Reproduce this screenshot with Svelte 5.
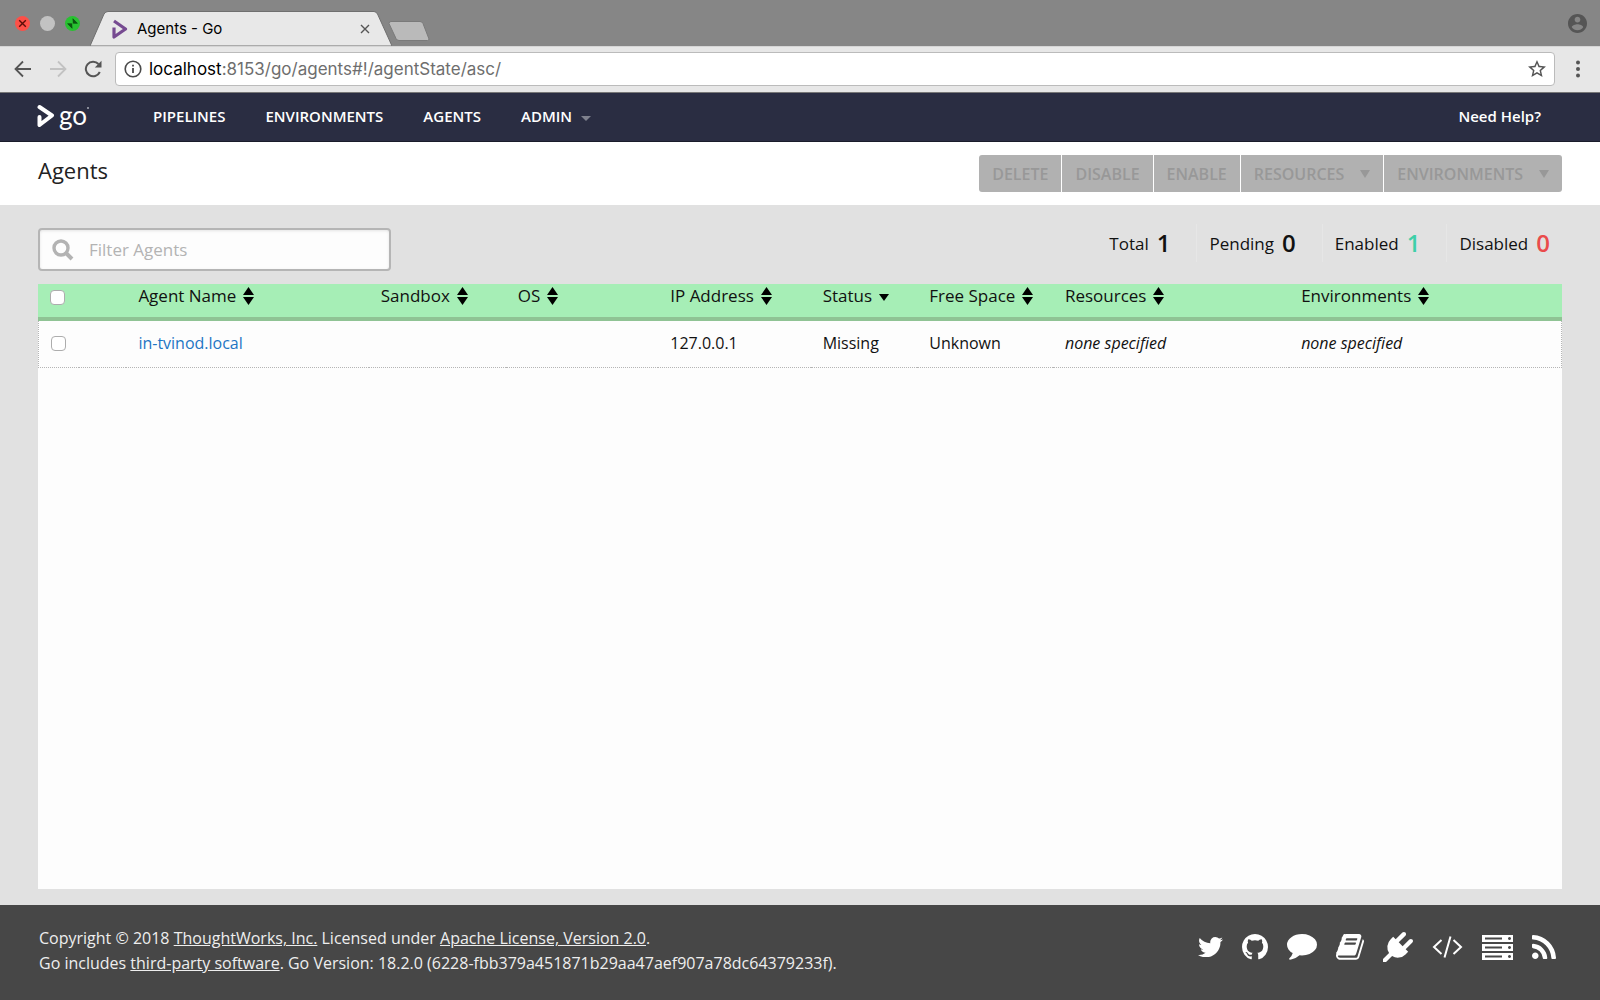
<script lang="ts">
  interface Agent {
    name: string;
    sandbox: string;
    os: string;
    ip: string;
    status: string;
    freeSpace: string;
    resources: string[];
    environments: string[];
  }

  const agents: Agent[] = [
    {
      name: 'in-tvinod.local',
      sandbox: '',
      os: '',
      ip: '127.0.0.1',
      status: 'Missing',
      freeSpace: 'Unknown',
      resources: [],
      environments: [],
    },
  ];

  const columns = [
    { key: 'name', label: 'Agent Name' },
    { key: 'sandbox', label: 'Sandbox' },
    { key: 'os', label: 'OS' },
    { key: 'ip', label: 'IP Address' },
    { key: 'status', label: 'Status' },
    { key: 'space', label: 'Free Space' },
    { key: 'resources', label: 'Resources' },
    { key: 'environments', label: 'Environments' },
  ];

  const counts = [
    { label: 'Total', value: 1, kind: 'total' },
    { label: 'Pending', value: 0, kind: 'pending' },
    { label: 'Enabled', value: 1, kind: 'enabled' },
    { label: 'Disabled', value: 0, kind: 'disabled' },
  ];

  const actions = [
    { label: 'DELETE', menu: false },
    { label: 'DISABLE', menu: false },
    { label: 'ENABLE', menu: false },
    { label: 'RESOURCES', menu: true },
    { label: 'ENVIRONMENTS', menu: true },
  ];

  let sortedBy = $state('status');
  let filterText = $state('');
  let checked = $state<string[]>([]);

  const visible = $derived(
    agents.filter((a) => a.name.toLowerCase().includes(filterText.toLowerCase()))
  );
  const allChecked = $derived(visible.length > 0 && checked.length === visible.length);

  function toggleAll() {
    checked = allChecked ? [] : visible.map((a) => a.name);
  }
</script>

<div class="window">
  <div class="tab-strip">
    <div class="lights">
      <button class="light close" aria-label="Close window">
        <svg viewBox="0 0 15 15"><path d="M4.200 4.200l6.600 6.600M10.800 4.200l-6.600 6.600" stroke="#5c0d08" stroke-width="1.400" /></svg>
      </button>
      <button class="light minimize" aria-label="Minimize window"></button>
      <button class="light zoom" aria-label="Zoom window">
        <svg viewBox="0 0 15 15" fill="#0b5410">
          <path d="M7.600 2.200L13 7.600L8.200 7.200z" />
          <path d="M7.400 12.800L2 7.400L6.800 7.800z" />
          <path d="M7.800 2.500V7.500H12.500zM7.200 12.500V7.500H2.500z" />
        </svg>
      </button>
    </div>
    <div class="tab">
      <svg class="tab-shape" viewBox="0 0 302 35" preserveAspectRatio="none">
        <path d="M0 35L14 3Q15.500 .5 18 .5H284Q286 .5 287.500 3L302 35z" fill="#e8e8e8" stroke="#6f6f6f" />
      </svg>
      <svg class="favicon" viewBox="0 0 16 20">
        <path d="M2 2L13.500 10L2 18V8.500" fill="none" stroke="#764a91" stroke-width="3.200" stroke-linejoin="round" />
      </svg>
      <span class="tab-title">Agents - Go</span>
      <button class="tab-close" aria-label="Close tab">
        <svg viewBox="0 0 10 10"><path d="M1 1l8 8M9 1l-8 8" stroke="#555" stroke-width="1.400" /></svg>
      </button>
    </div>
    <button class="new-tab" aria-label="New tab">
      <svg viewBox="0 0 42 20">
        <path d="M3 .5H32Q34 .5 35 2.500L41 18Q41 19.500 39.500 19.500H11Q9 19.500 8 17.500L1 2.500Q1 .5 3 .5z" fill="#bababa" stroke="#7a7a7a" />
      </svg>
    </button>
    <button class="profile" aria-label="Profile">
      <svg viewBox="2 2 20 20" fill="#555">
        <path d="M12 2C6.480 2 2 6.480 2 12s4.480 10 10 10 10-4.480 10-10S17.520 2 12 2zm0 3c1.660 0 3 1.340 3 3s-1.340 3-3 3-3-1.340-3-3 1.340-3 3-3zm0 14.200c-2.500 0-4.710-1.280-6-3.220.030-1.990 4-3.080 6-3.080 1.990 0 5.970 1.090 6 3.080-1.290 1.940-3.500 3.220-6 3.220z" />
      </svg>
    </button>
  </div>

  <div class="toolbar">
    <div class="tools">
      <button class="tool" aria-label="Back">
        <svg viewBox="0 0 18 18" fill="none" stroke="#555" stroke-width="1.800">
          <path d="M17 9H2M9 1.500L1.500 9L9 16.500" />
        </svg>
      </button>
      <button class="tool" aria-label="Forward">
        <svg viewBox="0 0 18 18" fill="none" stroke="#c2c2c2" stroke-width="1.800">
          <path d="M1 9H16M9 1.500L16.500 9L9 16.500" />
        </svg>
      </button>
      <button class="tool" aria-label="Reload">
        <svg viewBox="0 0 18 18" fill="none" stroke="#555" stroke-width="2">
          <path d="M15.800 12A7.300 7.300 0 1 1 14.500 4" />
          <path d="M17.500 .8V7.500H10.800z" fill="#555" stroke="none" />
        </svg>
      </button>
    </div>
    <div class="address">
      <svg class="info" viewBox="0 0 18 18" fill="none" stroke="#4a4a4a">
        <circle cx="9" cy="9" r="7.800" stroke-width="1.600" />
        <path d="M9 8v5M9 4.800v1.800" stroke-width="1.800" />
      </svg>
      <span class="url"><b>localhost</b>:8153/go/agents#!/agentState/asc/</span>
      <button class="star" aria-label="Bookmark this page">
        <svg viewBox="2 1 20 21" fill="#555">
          <path d="M22 9.240l-7.190-.620L12 2 9.190 8.630 2 9.240l5.460 4.730L5.820 21 12 17.270 18.180 21l-1.630-7.030L22 9.240zM12 15.400l-3.760 2.270 1-4.280-3.320-2.880 4.380-.380L12 6.100l1.710 4.040 4.380.380-3.320 2.880 1 4.280L12 15.400z" />
        </svg>
      </button>
    </div>
    <button class="menu" aria-label="Browser menu">
      <svg viewBox="0 0 4 18" fill="#555">
        <circle cx="2" cy="2.500" r="2" /><circle cx="2" cy="9" r="2" /><circle cx="2" cy="15.500" r="2" />
      </svg>
    </button>
  </div>

  <nav class="site-nav">
    <a class="logo" href="#home" aria-label="Go home">
      <svg viewBox="0 0 18 24" fill="none" stroke="#fff" stroke-width="4" stroke-linejoin="round" stroke-linecap="round">
        <path d="M2.500 3L15 11.500L2.500 21V13" />
      </svg>
      <span class="wordmark">go</span>
    </a>
    <a href="#pipelines">PIPELINES</a>
    <a href="#environments">ENVIRONMENTS</a>
    <a href="#agents">AGENTS</a>
    <a class="has-menu" href="#admin">ADMIN</a>
    <a class="help" href="#help">Need Help?</a>
  </nav>

  <header class="page-header">
    <h1>Agents</h1>
    <div class="actions">
      {#each actions as action (action.label)}
        <button class:dropdown={action.menu} disabled>{action.label}</button>
      {/each}
    </div>
  </header>

  <main>
    <div class="summary">
      <div class="search">
        <svg viewBox="0 0 22 22" fill="none" stroke="#b3b3b3">
          <circle cx="9" cy="9" r="7" stroke-width="3.400" />
          <path d="M14 14l6 6" stroke-width="4" />
        </svg>
        <input type="text" placeholder="Filter Agents" aria-label="Filter Agents" bind:value={filterText} />
      </div>
      <ul class="counts">
        {#each counts as count (count.kind)}
          <li class={count.kind}>
            <span>{count.label}</span>
            <strong>{count.value}</strong>
          </li>
        {/each}
      </ul>
    </div>

    <div class="panel">
      <table>
        <colgroup>
          <col class="col-check" />
          <col class="col-icon" />
          {#each columns as column (column.key)}
            <col class="col-{column.key}" />
          {/each}
        </colgroup>
        <thead>
          <tr>
            <th class="check">
              <input type="checkbox" aria-label="Select all agents" checked={allChecked} onchange={toggleAll} />
            </th>
            <th></th>
            {#each columns as column (column.key)}
              <th>
                <button class="sort" onclick={() => (sortedBy = column.key)}>
                  {column.label}
                  <svg viewBox="0 0 11 18">
                    {#if sortedBy === column.key}
                      <path d="M0 7H10L5 14z" />
                    {:else}
                      <path d="M0 8L5.500 0L11 8zM0 10H11L5.500 18z" />
                    {/if}
                  </svg>
                </button>
              </th>
            {/each}
          </tr>
        </thead>
        <tbody>
          {#each visible as agent (agent.name)}
            <tr>
              <td class="check">
                <input type="checkbox" aria-label="Select {agent.name}" value={agent.name} bind:group={checked} />
              </td>
              <td></td>
              <td><a href="#agent">{agent.name}</a></td>
              <td>{agent.sandbox}</td>
              <td>{agent.os}</td>
              <td>{agent.ip}</td>
              <td>{agent.status}</td>
              <td>{agent.freeSpace}</td>
              <td>
                {#if agent.resources.length}{agent.resources.join(' | ')}{:else}<em>none specified</em>{/if}
              </td>
              <td>
                {#if agent.environments.length}{agent.environments.join(' | ')}{:else}<em>none specified</em>{/if}
              </td>
            </tr>
          {/each}
        </tbody>
      </table>
    </div>
  </main>

  <footer>
    <div class="legal">
      <p>
        Copyright © 2018 <a href="#thoughtworks">ThoughtWorks, Inc.</a> Licensed under
        <a href="#license">Apache License, Version 2.0</a>.
      </p>
      <p>
        Go includes <a href="#third-party">third-party software</a>. Go Version: 18.2.0
        (6228-fbb379a451871b29aa47aef907a78dc64379233f).
      </p>
    </div>
    <div class="social">
      <a href="#twitter" aria-label="Twitter">
        <svg width="25" viewBox="108 256 1576 1280"><path d="M1684 408q-67 98-162 167 1 14 1 42 0 130-38 259.500t-115.500 248.500-184.500 210.500-258 146-323 54.500q-271 0-496-145 35 4 78 4 225 0 401-138-105-2-188-64.500t-114-159.500q33 5 61 5 43 0 85-11-112-23-185.500-111.500t-73.500-205.500v-4q68 38 146 41-66-44-105-115t-39-154q0-88 44-163 121 149 294.500 238.500t371.500 99.500q-8-38-8-74 0-134 94.500-228.500t228.500-94.500q140 0 236 102 109-21 205-78-37 115-142 178 93-10 186-50z" /></svg>
      </a>
      <a href="#github" aria-label="GitHub">
        <svg width="26" viewBox="128 128 1536 1536"><path d="M896 128q209 0 385.500 103t279.500 279.500 103 385.500q0 251-146.500 451.500t-378.500 277.500q-27 5-40-7t-13-30q0-3 .5-76.500t.5-134.500q0-97-52-142 57-6 102.500-18t94-39 81-66.500 53-105 20.500-150.500q0-119-79-206 37-91-8-204-28-9-81 11t-92 44l-38 24q-93-26-192-26t-192 26q-16-11-42.500-27t-83.500-38.500-85-13.500q-45 113-8 204-79 87-79 206 0 85 20.500 150t52.500 105 80.500 67 94 39 102.500 18q-39 36-49 103-21 10-45 15t-57 5-65.500-21.500-55.500-62.500q-19-32-48.500-52t-49.500-24l-20-3q-21 0-29 4.500t-5 11.500 9 14 13 12l7 5q22 10 43.500 38t31.500 51l10 23q13 38 44 61.500t67 30 69.500 7 55.500-3.500l23-4q0 38 .5 88.500t.5 54.500q0 18-13 30t-40 7q-232-77-378.500-277.500t-146.500-451.500q0-209 103-385.500t279.500-279.500 385.500-103z" /></svg>
      </a>
      <a href="#chat" aria-label="Chat">
        <svg width="30" viewBox="0 256 1792 1536"><path d="M1792 896q0 174-120 321.500t-326 233-450 85.500q-70 0-145-8-198 175-460 242-49 14-114 22-17 2-30.500-9t-17.500-29v-1q-3-4-.5-12t2-10 4.500-9.500l6-9 7-8.500 8-9q7-8 31-34.500t34.500-38 31-39.500 32.500-51 27-59 26-76q-157-89-247.500-220t-90.500-281q0-130 71-248.500t191-204.500 286-136.500 348-50.500q244 0 450 85.500t326 233 120 321.500z" /></svg>
      </a>
      <a href="#docs" aria-label="Documentation">
        <svg width="28" viewBox="64 128 1664 1536"><path d="M1703 478q40 57 18 129l-275 906q-19 64-76.500 107.500t-122.500 43.500h-923q-77 0-148.500-53.500t-99.500-131.500q-24-67-2-127 0-4 3-27t4-37q1-8-3-21.500t-3-19.500q2-11 8-21t16.500-23.500 16.500-23.500q23-38 45-91.500t30-91.500q3-10 .5-30t-.5-28q3-11 17-28t17-23q21-36 42-92t25-90q1-9-2.500-32t.5-28q4-13 22-30.500t22-22.500q19-26 42.500-84.500t27.500-96.500q1-8-3-25.500t-2-26.500q2-8 9-18t18-23 17-21q8-12 16.500-30.500t15-35 16-36 19.500-32 26.500-23.500 36-11.500 47.500 5.500l-1 3q38-9 51-9h761q74 0 114 56t18 130l-274 906q-36 119-71.500 153.500t-128.500 34.500h-869q-27 0-38 15-11 16-1 43 24 70 144 70h923q29 0 56-15.500t35-41.500l300-987q7-22 5-57 38 15 59 43zm-1064 2q-4 13 2 22.500t20 9.500h608q13 0 25.500-9.500t16.500-22.500l21-64q4-13-2-22.500t-20-9.500h-608q-13 0-25.500 9.500t-16.500 22.500zm-83 256q-4 13 2 22.500t20 9.500h608q13 0 25.500-9.500t16.500-22.500l21-64q4-13-2-22.500t-20-9.500h-608q-13 0-25.500 9.500t-16.500 22.500z" /></svg>
      </a>
      <a href="#plugins" aria-label="Plugins">
        <svg width="30" viewBox="0 0 1792 1792"><path d="M1755 453q37 38 37 90.500t-37 90.500l-401 400 150 150-160 160q-163 163-389.500 186.500t-411.500-100.500l-362 362h-181v-181l362-362q-124-185-100.500-411.500t186.500-389.500l160-160 150 150 400-401q38-37 91-37t90 37 37 90.500-37 90.500l-400 401 234 234 401-400q38-37 91-37t90 37z" /></svg>
      </a>
      <a href="#api" aria-label="API">
        <svg class="line" width="31" viewBox="0 0 31 24"><path d="M9.500 5L2 12L9.500 19M21.500 5L29 12L21.500 19M18.500 1.500L12.500 22.500" /></svg>
      </a>
      <a href="#server" aria-label="Server details">
        <svg width="31" viewBox="0 0 31 25"><path fill-rule="evenodd" d="M0 0H31V7H0zM3 2.500V4.500H20V2.500zM0 9H31V16H0zM3 11.500V13.500H20V11.500zM0 18H31V25H0zM3 20.500V22.500H20V20.500zM27.500 2a1.500 1.500 0 1 0 .01 0zM27.500 11a1.500 1.500 0 1 0 .01 0zM27.500 20a1.500 1.500 0 1 0 .01 0z" /></svg>
      </a>
      <a href="#feed" aria-label="Feed">
        <svg width="24" viewBox="192 128 1408 1408"><path d="M576 1344q0 80-56 136t-136 56-136-56-56-136 56-136 136-56 136 56 56 136zm512 123q2 28-17 48-18 21-47 21h-135q-25 0-43-16.500t-20-41.500q-22-229-184.500-391.500t-391.500-184.500q-25-2-41.500-20t-16.500-43v-135q0-29 21-47 17-17 43-17h5q160 13 306 80.500t259 181.500q114 113 181.500 259t80.500 306zm512 2q2 27-18 47-18 20-46 20h-143q-26 0-44.500-17.500t-19.500-42.500q-12-215-101-408.500t-231.500-336-336-231.500-408.500-102q-25-1-42.500-19.500t-17.500-43.500v-143q0-28 20-46 18-18 44-18h3q262 13 501.500 120t425.500 294q187 186 294 425.500t120 501.500z" /></svg>
      </a>
    </div>
  </footer>
</div>

<style>
  :global(body) {
    margin: 0;
  }

  .window {
    display: flex;
    flex-direction: column;
    min-height: 100vh;
    background: #e1e1e1;
    color: #111;
    font-family: 'Open Sans', 'Noto Sans', sans-serif;
    font-size: 17px;
  }

  button {
    margin: 0;
    padding: 0;
    border: none;
    background: none;
    color: inherit;
    font: inherit;
    cursor: pointer;
  }

  svg {
    display: block;
    flex-shrink: 0;
  }

  a {
    color: inherit;
    text-decoration: none;
  }

  /* browser chrome */
  .tab-strip {
    display: flex;
    align-items: flex-end;
    height: 47px;
    background: #868686;
    border-bottom: 1px solid #d5d5d5;
    box-sizing: border-box;
    font-family: Inter, Roboto, sans-serif;
  }

  .lights {
    display: flex;
    gap: 10px;
    width: 75px;
    padding: 0 0 15px 15px;
  }

  .light {
    width: 15px;
    height: 15px;
    border-radius: 50%;
  }

  .close {
    background: #fc5048;
  }

  .minimize {
    background: #c2c2c2;
  }

  .zoom {
    background: #28c131;
  }

  .tab {
    position: relative;
    display: flex;
    align-items: center;
    width: 302px;
    height: 35px;
    padding: 0 22px;
    box-sizing: border-box;
  }

  .tab-shape {
    position: absolute;
    inset: 0;
    width: 100%;
    height: 100%;
  }

  .favicon {
    position: relative;
    width: 16px;
    height: 20px;
  }

  .tab-title {
    position: relative;
    flex: 1;
    margin-left: 9px;
    font-size: 15px;
    color: #000;
  }

  .tab-close {
    position: relative;
    width: 10px;
    height: 10px;
  }

  .new-tab {
    width: 42px;
    height: 20px;
    margin: 0 0 5px -4px;
  }

  .profile {
    width: 19px;
    height: 19px;
    margin: 0 13px 13px auto;
  }

  .toolbar {
    display: flex;
    align-items: center;
    height: 46px;
    padding: 0 20px 2px 14px;
    background: #e7e7e7;
    border-bottom: 1px solid #777;
    box-sizing: border-box;
    font-family: Inter, Roboto, sans-serif;
  }

  .tools {
    display: flex;
    gap: 17px;
    margin-right: 13px;
  }

  .tool {
    width: 18px;
    height: 18px;
  }

  .address {
    display: flex;
    flex: 1;
    align-items: center;
    height: 34px;
    padding: 0 8px;
    border: 1px solid #bbb;
    border-radius: 4px;
    background: #fff;
    box-sizing: border-box;
  }

  .info {
    width: 18px;
    height: 18px;
  }

  .url {
    flex: 1;
    margin-left: 7px;
    font-size: 17px;
    color: #6e6e6e;
  }

  .url b {
    color: #000;
    font-weight: 400;
  }

  .star {
    width: 18px;
    height: 19px;
  }

  .menu {
    width: 4px;
    height: 18px;
    margin-left: 21px;
  }

  /* site navigation */
  .site-nav {
    display: flex;
    align-items: center;
    gap: 40px;
    height: 49px;
    padding: 0 59px 2px 37px;
    background: #2a2d42;
    border-bottom: 1px solid #1a1c2a;
    box-sizing: border-box;
    color: #fff;
    font-size: 15px;
    font-weight: 600;
  }

  .logo {
    display: flex;
    align-items: center;
    gap: 4px;
    width: 76px;
  }

  .logo svg {
    width: 18px;
    height: 24px;
  }

  .wordmark {
    padding-bottom: 2px;
    font-family: Lato, sans-serif;
    font-size: 26px;
    font-weight: 400;
    line-height: 24px;
  }

  .wordmark::after {
    content: '';
    display: inline-block;
    width: 2px;
    height: 2px;
    border-radius: 50%;
    background: #a9abb6;
    vertical-align: 16px;
  }

  .has-menu::after {
    content: '';
    display: inline-block;
    margin-left: 9px;
    border: 5px solid transparent;
    border-top-color: #7f818d;
    border-bottom: none;
    vertical-align: 1px;
  }

  .help {
    margin-left: auto;
  }

  .page-header {
    display: flex;
    justify-content: space-between;
    align-items: flex-start;
    height: 63px;
    padding: 13px 38px 0;
    background: #fff;
    box-sizing: border-box;
  }

  h1 {
    margin: 0;
    font-size: 22px;
    font-weight: 400;
    line-height: 31px;
    color: #222;
  }

  .actions {
    display: flex;
    gap: 1px;
    border-radius: 3px;
    overflow: hidden;
  }

  .actions button {
    height: 37px;
    padding: 0 13px;
    background: #b1b1b1;
    color: #989898;
    font-size: 16px;
    font-weight: 600;
    cursor: not-allowed;
  }

  .dropdown::after {
    content: '';
    display: inline-block;
    margin-left: 16px;
    border: 5px solid transparent;
    border-top: 8px solid #989898;
    border-bottom: none;
    vertical-align: 2px;
  }

  /* agents list */
  main {
    display: flex;
    flex: 1;
    flex-direction: column;
    padding: 19px 38px 16px;
  }

  .summary {
    display: flex;
    justify-content: space-between;
    align-items: flex-start;
    margin-bottom: 13px;
  }

  .search {
    display: flex;
    align-items: center;
    width: 353px;
    height: 43px;
    margin-top: 4px;
    padding-left: 12px;
    border: 2px solid #b5b5b5;
    border-radius: 4px;
    background: #fdfdfd;
    box-shadow: inset 0 1px 3px rgba(0, 0, 0, 0.1);
    box-sizing: border-box;
  }

  .search svg {
    width: 22px;
    height: 22px;
  }

  .search input {
    flex: 1;
    min-width: 0;
    margin-left: 15px;
    padding: 0;
    border: none;
    background: none;
    color: inherit;
    font: inherit;
    outline: none;
  }

  .search input::placeholder {
    color: #b3b3b3;
  }

  .counts {
    display: flex;
    margin: 0;
    padding: 0;
    list-style: none;
  }

  .counts li {
    display: flex;
    align-items: center;
    gap: 8px;
    height: 38px;
    padding: 0 12px;
  }

  .counts li + li {
    border-left: 1px solid #e6e6e6;
  }

  .counts li:not(:last-child) {
    padding-right: 26px;
  }

  .counts strong {
    font-size: 24px;
    font-weight: 600;
    line-height: 32px;
  }

  .counts .enabled strong {
    color: #3ecfa8;
  }

  .counts .disabled strong {
    color: #ea4b4b;
  }

  .panel {
    flex: 1;
    background: #fdfdfd;
  }

  table {
    width: 100%;
    border-spacing: 0;
    table-layout: fixed;
  }

  .col-check {
    width: 2.7%;
  }

  .col-icon {
    width: 3.1%;
  }

  .col-name {
    width: 15.9%;
  }

  .col-sandbox {
    width: 9%;
  }

  .col-os,
  .col-ip {
    width: 10%;
  }

  .col-status {
    width: 7%;
  }

  .col-space {
    width: 8.9%;
  }

  .col-resources {
    width: 15.5%;
  }

  th,
  td {
    padding: 0 0 0 12px;
    text-align: left;
    font-weight: 400;
    white-space: nowrap;
  }

  th {
    height: 37px;
    padding-bottom: 9px;
    border-bottom: 4px solid #8fc394;
    background: #a6eeb6;
    box-sizing: border-box;
    line-height: 24px;
  }

  th.check {
    padding-bottom: 6px;
  }

  td {
    height: 46px;
    padding-bottom: 2px;
    border-bottom: 1px dotted #b5b5b5;
    box-sizing: content-box;
    font-size: 16px;
    line-height: 24px;
  }

  tbody td {
    height: 44px;
  }

  td:first-child {
    border-left: 1px dotted #b5b5b5;
  }

  td:last-child {
    border-right: 1px dotted #b5b5b5;
  }

  td a {
    color: #1d76c4;
  }

  .sort {
    display: flex;
    align-items: center;
    gap: 7px;
  }

  .sort svg {
    width: 11px;
    height: 18px;
  }

  .check input {
    display: block;
    width: 15px;
    height: 15px;
    margin: 0;
    border: 1px solid #adadad;
    border-radius: 4px;
    background: #fff;
    appearance: none;
  }

  .check input:checked {
    background: #1d76c4;
  }

  footer {
    display: flex;
    justify-content: space-between;
    align-items: center;
    padding: 21px 44px 24px 39px;
    background: #474747;
    color: #eee;
  }

  .legal {
    font-size: 16px;
    line-height: 25px;
  }

  .legal p {
    margin: 0;
  }

  .legal a {
    text-decoration: underline;
  }

  .social {
    display: flex;
    align-items: center;
    gap: 19px;
    margin-bottom: 8px;
    fill: #fff;
  }

  .social .line {
    fill: none;
    stroke: #fff;
    stroke-width: 2;
  }
</style>
